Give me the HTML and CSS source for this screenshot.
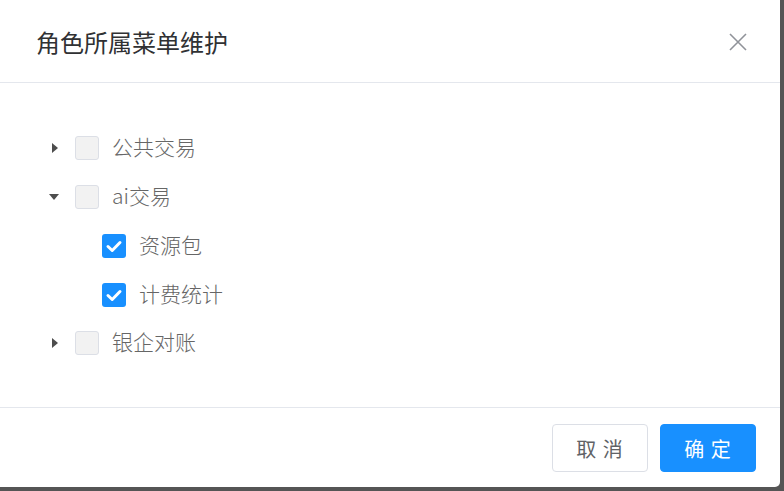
FILE: index.html
```html
<!DOCTYPE html>
<html lang="zh-CN">
<head>
    <meta charset="UTF-8">
    <meta name="viewport" content="width=device-width, initial-scale=1.0">
    <title>角色所属菜单维护</title>
    <link rel="stylesheet" href="styles.css">
</head>
<body>
    <div class="dialog">
        <div class="dialog-header">
            <span class="dialog-title">角色所属菜单维护</span>
            <span class="dialog-close">
                <svg width="20" height="20" viewBox="0 0 20 20"><path d="M2 2 L18 18 M18 2 L2 18" stroke="#909399" stroke-width="1.6" fill="none"/></svg>
            </span>
        </div>

        <div class="dialog-body">
            <div class="tree">
                <div class="tree-node">
                    <span class="caret caret-right"></span>
                    <span class="checkbox"></span>
                    <span class="node-label">公共交易</span>
                </div>
                <div class="tree-node">
                    <span class="caret caret-down"></span>
                    <span class="checkbox"></span>
                    <span class="node-label">ai交易</span>
                </div>
                <div class="tree-node child">
                    <span class="caret"></span>
                    <span class="checkbox checked">
                        <svg width="24" height="24" viewBox="0 0 24 24"><path d="M6 12.5 L10.2 16.5 L18 8.5" stroke="#fff" stroke-width="3" fill="none" stroke-linecap="round" stroke-linejoin="round"/></svg>
                    </span>
                    <span class="node-label">资源包</span>
                </div>
                <div class="tree-node child">
                    <span class="caret"></span>
                    <span class="checkbox checked">
                        <svg width="24" height="24" viewBox="0 0 24 24"><path d="M6 12.5 L10.2 16.5 L18 8.5" stroke="#fff" stroke-width="3" fill="none" stroke-linecap="round" stroke-linejoin="round"/></svg>
                    </span>
                    <span class="node-label">计费统计</span>
                </div>
                <div class="tree-node">
                    <span class="caret caret-right"></span>
                    <span class="checkbox"></span>
                    <span class="node-label">银企对账</span>
                </div>
            </div>
        </div>

        <div class="dialog-footer">
            <button class="btn">取 消</button>
            <button class="btn btn-primary">确 定</button>
        </div>
    </div>
</body>
</html>
```

FILE: styles.css
```css
* {
    box-sizing: border-box;
}
html, body {
    height: 491px;
}
body {
    margin: 0;
    background: #555555;
    overflow: hidden;
    font-family: "Noto Sans CJK SC", "Noto Sans", sans-serif;
}
.dialog {
    margin: -4px 0 0 -4px;
    width: 784px;
    height: 491px;
    background: white;
    border-radius: 5px;
    display: flex;
    flex-direction: column;
}
.dialog-header {
    height: 87px;
    padding: 6px 32px 0 40px;
    border-bottom: 1px solid #e4e7ed;
    display: flex;
    align-items: center;
    justify-content: space-between;
}
.dialog-title {
    font-size: 24px;
    line-height: 1;
    color: #303133;
}
.dialog-close {
    display: flex;
    width: 20px;
    height: 20px;
}
.dialog-body {
    flex: 1;
    padding: 41px 0 0 46px;
    border-bottom: 1px solid #e4e7ed;
}
.tree-node {
    height: 48.75px;
    display: flex;
    align-items: center;
}
.tree-node.child {
    padding-left: 27px;
}
.caret {
    width: 24px;
    height: 24px;
    margin-right: 9px;
    display: flex;
    align-items: center;
    justify-content: center;
}
.caret-right::before {
    content: "";
    border-left: 6px solid #4d4d4d;
    border-top: 5.5px solid transparent;
    border-bottom: 5.5px solid transparent;
    margin-left: 2px;
}
.caret-down::before {
    content: "";
    border-top: 6px solid #4d4d4d;
    border-left: 5px solid transparent;
    border-right: 5px solid transparent;
}
.checkbox {
    width: 24px;
    height: 24px;
    border: 1px solid #dcdfe6;
    border-radius: 3px;
    background: #f2f2f2;
    display: flex;
}
.checkbox.checked {
    background: #1890ff;
    border: none;
}
.node-label {
    margin: 0 0 3px 13px;
    font-size: 21px;
    line-height: 1;
    font-weight: 300;
    color: #666666;
}
.dialog-footer {
    height: 79px;
    padding: 16px 24px 0 0;
    display: flex;
    justify-content: flex-end;
    align-items: flex-start;
    gap: 12px;
}
.btn {
    width: 96px;
    height: 48px;
    border: 1px solid #dcdfe6;
    border-radius: 4px;
    background: white;
    color: #606266;
    font-family: "Noto Sans CJK SC", sans-serif;
    font-size: 20px;
    letter-spacing: 1px;
    cursor: pointer;
}
.btn-primary {
    background: #1890ff;
    border-color: #1890ff;
    color: white;
}
```
